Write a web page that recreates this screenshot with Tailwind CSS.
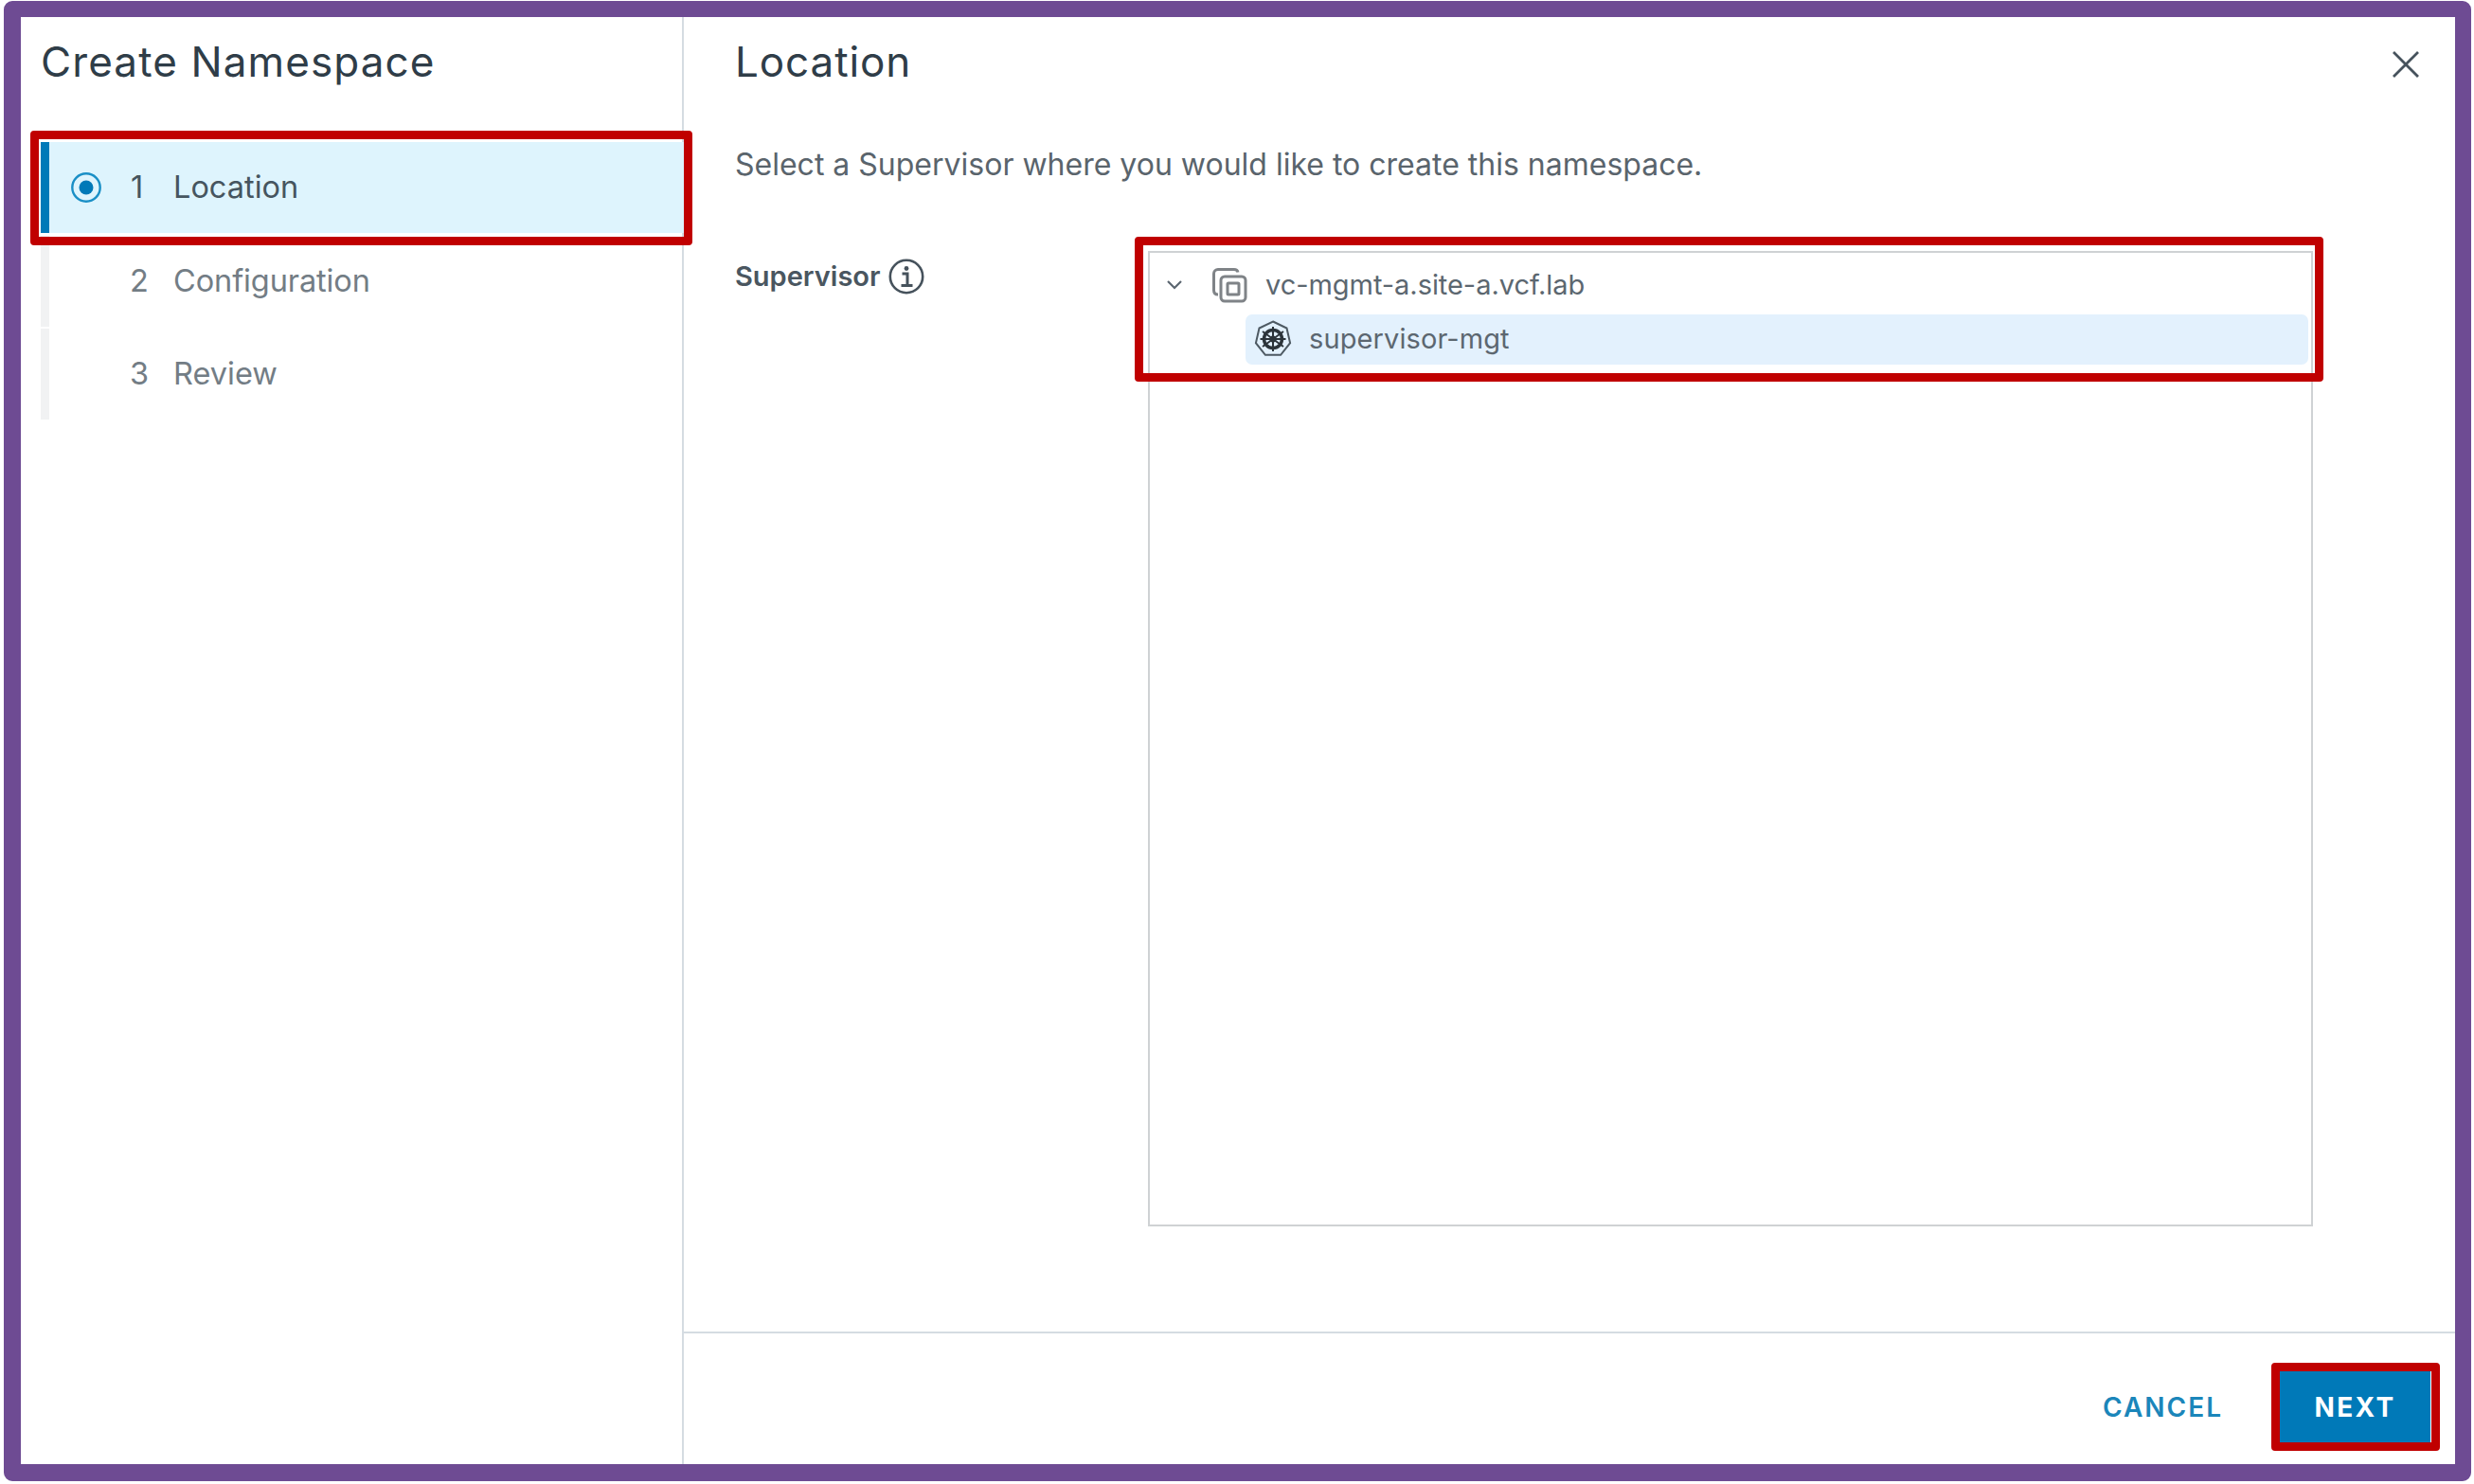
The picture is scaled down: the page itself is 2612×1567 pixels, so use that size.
<!DOCTYPE html>
<html>
<head>
<meta charset="utf-8">
<script src="https://cdn.jsdelivr.net/npm/@tailwindcss/browser@4"></script>
<title>Create Namespace</title>
</head>
<body class="bg-white w-[2612px] h-[1567px] overflow-hidden font-['Inter','Noto_Sans',sans-serif]">
<div class="relative w-[2605px] h-[1563px] ml-[4px] mt-[1px] border-t-[17px] border-b-[18px] border-l-[18px] border-r-[17px] border-[#6e4b93] rounded-[9px] bg-white flex">
  <aside class="w-[700px] h-full border-r-2 border-[#d5dce2] shrink-0">
    <h1 class="h-[94px] pl-[21px] flex items-center text-[44px] text-[#2f3d48] tracking-[1.1px]">Create Namespace</h1>
    <ol class="mt-[38px] ml-[21px] -mr-[2px] flex flex-col gap-[2.5px]">
      <li class="relative h-[96px] flex items-center border-l-[9px] border-[#0079b8] bg-[#def4fd] text-[32.5px] text-[#46555f]">
        <span class="w-[86px] pl-[23px]">
          <svg class="block" width="32" height="32" viewBox="0 0 32 32"><circle cx="16" cy="16" r="14.7" fill="none" stroke="#1a8fc6" stroke-width="2.4"/><circle cx="16" cy="16" r="7.5" fill="#0079b8"/></svg>
        </span>
        <span class="w-[45px]">1</span><span>Location</span>
      </li>
      <li class="h-[96px] pt-[1px] flex items-center border-l-[9px] border-[#f1f2f3] text-[32.5px] text-[#737d85]">
        <span class="w-[85px]"></span><span class="w-[46px]">2</span><span class="tracking-[-0.1px]">Configuration</span>
      </li>
      <li class="h-[96px] flex items-center border-l-[9px] border-[#f1f2f3] text-[32.5px] text-[#737d85]">
        <span class="w-[85px]"></span><span class="w-[46px]">3</span><span>Review</span>
      </li>
    </ol>
  </aside>
  <section class="flex-1 flex flex-col min-w-0">
    <div class="flex-1 pl-[54px] relative">
      <h2 class="h-[94px] flex items-center text-[44px] text-[#2f3d48] tracking-[0.9px]">Location</h2>
      <p class="mt-[42px] h-[40px] flex items-center text-[32px] text-[#5a646c]">Select a Supervisor where you would like to create this namespace.</p>
      <div class="mt-[71px] flex">
        <div class="w-[436px] h-[54px] flex items-center text-[29px] font-semibold text-[#4a5660]">
          <span>Supervisor</span>
          <svg class="ml-[8px]" width="38" height="38" viewBox="0 0 38 38" fill="none" stroke="#46525c"><circle cx="19" cy="19" r="17.2" stroke-width="2.6"/><circle cx="19" cy="10.5" r="2.4" fill="#46525c" stroke="none"/><path d="M14.5 16h5.500v12M13.500 28.500h12" stroke-width="3"/></svg>
        </div>
        <div class="w-[1230px] h-[1030px] border-2 border-[#cfd2d4]">
          <div class="h-[65px] pt-[3px] flex items-center text-[29px] text-[#5c6770]">
            <svg class="ml-[18px]" width="16" height="10" viewBox="0 0 16 10" fill="none"><path d="M1 1l7 7 7-7" stroke="#5b6670" stroke-width="2.2"/></svg>
            <svg class="ml-[32px]" width="37" height="37" viewBox="0 0 37 37" fill="none" stroke="#7f8387" stroke-width="3"><path d="M6 28c-2.500 0-4.500-1.500-4.500-4.500V6C1.500 3.500 3.500 1.500 6 1.500h17c2 0 3.500 1 4 3"/><rect x="9" y="9" width="26" height="26" rx="4"/><rect x="16" y="16" width="12" height="12" rx="1"/></svg>
            <span class="ml-[19px] tracking-[-0.05px]">vc-mgmt-a.site-a.vcf.lab</span>
          </div>
          <div class="h-[53px] ml-[101px] mr-[3px] rounded-[7px] bg-[#e3f1fd] flex items-center text-[29px] text-[#5c6770] pb-[2px]">
            <svg class="ml-[9px]" width="40" height="40" viewBox="0 0 40 40" fill="none"><path d="M20 1.500l14.500 7 3.600 15.700-10 12.600H11.900l-10-12.600L5.500 8.500z" stroke="#4e5a63" stroke-width="2"/><circle cx="20" cy="20" r="9.500" fill="none" stroke="#2c343a" stroke-width="3.500"/><circle cx="20" cy="20" r="3.500" fill="#2c343a"/><path d="M20 7v26M9 12l22 16M9 28l22-16M6.500 20h27" stroke="#2c343a" stroke-width="2"/></svg>
            <span class="ml-[18px] tracking-[0.1px]">supervisor-mgt</span>
          </div>
        </div>
      </div>
      <svg class="absolute left-[1803px] top-[35px]" width="30" height="30" viewBox="0 0 30 30" fill="none"><path d="M2 2l26 26M28 2L2 28" stroke="#46525c" stroke-width="2.8"/></svg>
    </div>
    <footer class="h-[140px] shrink-0 border-t-2 border-[#d5dce2] pt-[17px] flex items-center justify-end pr-[26px] text-[28px] font-semibold tracking-[2px]">
      <span class="text-[#1b86ba] mr-[60px]">CANCEL</span>
      <button class="w-[159px] h-[75px] bg-[#0079b8] text-white tracking-[2.300px] font-bold">NEXT</button>
    </footer>
  </section>
  <div class="absolute left-[10px] top-[120px] w-[699px] h-[121px] border-[9px] border-[#c00000] rounded-[4px]"></div>
  <div class="absolute left-[1176px] top-[232px] w-[1255px] h-[153px] border-[9px] border-[#c00000] rounded-[4px]"></div>
  <div class="absolute left-[2376px] top-[1421px] w-[178px] h-[93px] border-[9px] border-[#c00000] rounded-[4px]"></div>
</div>
</body>
</html>
